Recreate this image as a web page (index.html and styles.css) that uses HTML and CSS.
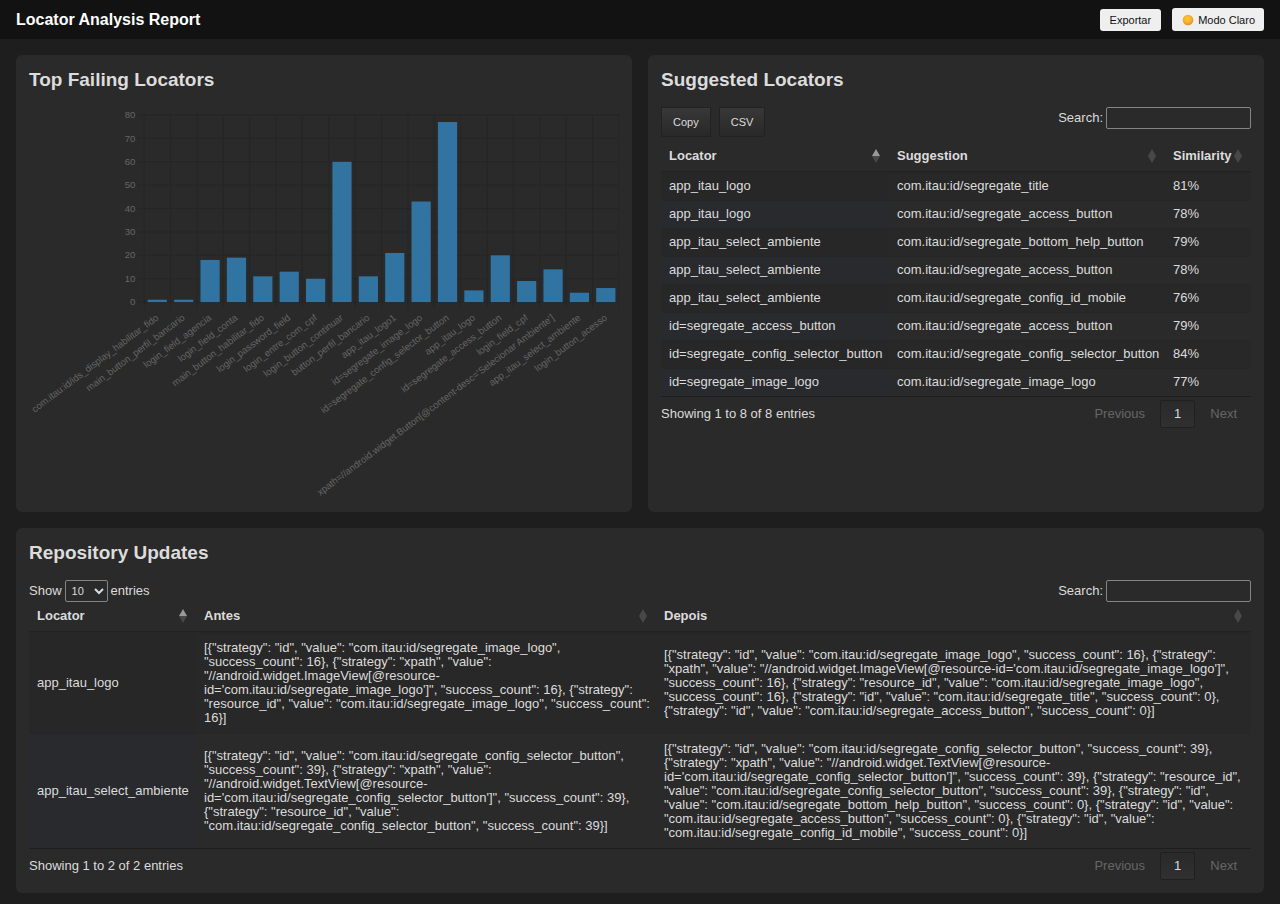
FILE: index.html
```
<!DOCTYPE html>
<html lang="pt-BR">
<head>
<meta charset="utf-8">
<title>Locator Analysis Report</title>
<link rel="stylesheet" href="styles.css">
</head>
<body>
<header class="topbar">
  <h1 class="topbar-title">Locator Analysis Report</h1>
  <div class="topbar-actions">
    <button class="action" type="button">Exportar</button>
    <button class="action action-theme" type="button">
      <svg class="sun" viewBox="0 0 12 12" aria-hidden="true">
        <defs><radialGradient id="sun" cx="45%" cy="40%" r="60%"><stop offset="0" stop-color="#fbc934"/><stop offset=".6" stop-color="#f5b02c"/><stop offset="1" stop-color="#e58a2c"/></radialGradient></defs>
        <circle cx="6" cy="6" r="5.3" fill="url(#sun)"/>
      </svg>
      Modo Claro
    </button>
  </div>
</header>
<main class="dashboard">
  <section class="card">
    <h2 class="card-title">Top Failing Locators</h2>
    <svg class="chart" id="chart" viewBox="0 0 738 490" role="img" aria-label="Top Failing Locators"></svg>
  </section>

  <section class="card">
    <h2 class="card-title">Suggested Locators</h2>
    <div class="toolbar">
      <div class="export-buttons">
        <button class="export" type="button">Copy</button>
        <button class="export" type="button">CSV</button>
      </div>
      <label class="field">Search: <input class="search" type="search"></label>
    </div>
    <table class="grid grid-suggestions">
      <colgroup><col class="col-name"><col class="col-suggestion"><col></colgroup>
      <thead>
        <tr>
          <th><span class="head">Locator<svg class="sort sort-asc" viewBox="0 0 8 14"><path d="M4 0 8 7H0z"/><path d="M4 14 8 7H0z"/></svg></span></th>
          <th><span class="head">Suggestion<svg class="sort" viewBox="0 0 8 14"><path d="M4 0 8 7H0z"/><path d="M4 14 8 7H0z"/></svg></span></th>
          <th><span class="head">Similarity<svg class="sort" viewBox="0 0 8 14"><path d="M4 0 8 7H0z"/><path d="M4 14 8 7H0z"/></svg></span></th>
        </tr>
      </thead>
      <tbody>
        <tr><td>app_itau_logo</td><td>com.itau:id/segregate_title</td><td>81%</td></tr>
        <tr><td>app_itau_logo</td><td>com.itau:id/segregate_access_button</td><td>78%</td></tr>
        <tr><td>app_itau_select_ambiente</td><td>com.itau:id/segregate_bottom_help_button</td><td>79%</td></tr>
        <tr><td>app_itau_select_ambiente</td><td>com.itau:id/segregate_access_button</td><td>78%</td></tr>
        <tr><td>app_itau_select_ambiente</td><td>com.itau:id/segregate_config_id_mobile</td><td>76%</td></tr>
        <tr><td>id=segregate_access_button</td><td>com.itau:id/segregate_access_button</td><td>79%</td></tr>
        <tr><td>id=segregate_config_selector_button</td><td>com.itau:id/segregate_config_selector_button</td><td>84%</td></tr>
        <tr><td>id=segregate_image_logo</td><td>com.itau:id/segregate_image_logo</td><td>77%</td></tr>
      </tbody>
    </table>
    <div class="table-footer">
      <span>Showing 1 to 8 of 8 entries</span>
      <nav class="pager" aria-label="Suggested Locators">
        <button class="page" type="button" disabled>Previous</button>
        <button class="page page-current" type="button">1</button>
        <button class="page" type="button" disabled>Next</button>
      </nav>
    </div>
  </section>

  <section class="card card-wide">
    <h2 class="card-title">Repository Updates</h2>
    <div class="toolbar toolbar-compact">
      <label class="field">Show <select class="length"><option>10</option><option>25</option><option>50</option><option>100</option></select> entries</label>
      <label class="field">Search: <input class="search" type="search"></label>
    </div>
    <table class="grid grid-updates">
      <colgroup><col class="col-locator"><col class="col-before"><col></colgroup>
      <thead>
        <tr>
          <th><span class="head">Locator<svg class="sort sort-asc" viewBox="0 0 8 14"><path d="M4 0 8 7H0z"/><path d="M4 14 8 7H0z"/></svg></span></th>
          <th><span class="head">Antes<svg class="sort" viewBox="0 0 8 14"><path d="M4 0 8 7H0z"/><path d="M4 14 8 7H0z"/></svg></span></th>
          <th><span class="head">Depois<svg class="sort" viewBox="0 0 8 14"><path d="M4 0 8 7H0z"/><path d="M4 14 8 7H0z"/></svg></span></th>
        </tr>
      </thead>
      <tbody>
        <tr>
          <td>app_itau_logo</td>
          <td>[{"strategy": "id", "value": "com.itau:id/segregate_image_logo", "success_count": 16}, {"strategy": "xpath", "value": "//android.widget.ImageView[@resource-id='com.itau:id/segregate_image_logo']", "success_count": 16}, {"strategy": "resource_id", "value": "com.itau:id/segregate_image_logo", "success_count": 16}]</td>
          <td>[{"strategy": "id", "value": "com.itau:id/segregate_image_logo", "success_count": 16}, {"strategy": "xpath", "value": "//android.widget.ImageView[@resource-id='com.itau:id/segregate_image_logo']", "success_count": 16}, {"strategy": "resource_id", "value": "com.itau:id/segregate_image_logo", "success_count": 16}, {"strategy": "id", "value": "com.itau:id/segregate_title", "success_count": 0}, {"strategy": "id", "value": "com.itau:id/segregate_access_button", "success_count": 0}]</td>
        </tr>
        <tr>
          <td>app_itau_select_ambiente</td>
          <td>[{"strategy": "id", "value": "com.itau:id/segregate_config_selector_button", "success_count": 39}, {"strategy": "xpath", "value": "//android.widget.TextView[@resource-id='com.itau:id/segregate_config_selector_button']", "success_count": 39}, {"strategy": "resource_id", "value": "com.itau:id/segregate_config_selector_button", "success_count": 39}]</td>
          <td>[{"strategy": "id", "value": "com.itau:id/segregate_config_selector_button", "success_count": 39}, {"strategy": "xpath", "value": "//android.widget.TextView[@resource-id='com.itau:id/segregate_config_selector_button']", "success_count": 39}, {"strategy": "resource_id", "value": "com.itau:id/segregate_config_selector_button", "success_count": 39}, {"strategy": "id", "value": "com.itau:id/segregate_bottom_help_button", "success_count": 0}, {"strategy": "id", "value": "com.itau:id/segregate_access_button", "success_count": 0}, {"strategy": "id", "value": "com.itau:id/segregate_config_id_mobile", "success_count": 0}]</td>
        </tr>
      </tbody>
    </table>
    <div class="table-footer">
      <span>Showing 1 to 2 of 2 entries</span>
      <nav class="pager" aria-label="Repository Updates">
        <button class="page" type="button" disabled>Previous</button>
        <button class="page page-current" type="button">1</button>
        <button class="page" type="button" disabled>Next</button>
      </nav>
    </div>
  </section>
</main>
<script src="chart.js"></script>
</body>
</html>
```
FILE: styles.css
```
* {
  box-sizing: border-box;
}

body {
  margin: 0;
  background: #1e1e1e;
  color: #dcdcdc;
  color-scheme: dark;
  font: 13px/14px "Liberation Sans", Arial, sans-serif;
}

button,
input,
select {
  font-family: inherit;
}

.topbar {
  display: flex;
  align-items: center;
  justify-content: space-between;
  min-height: 39px;
  padding: 0 16px;
  background: #121212;
  color: #fff;
}

.topbar-title {
  margin: 0;
  font-size: 16px;
  line-height: 20px;
}

.topbar-actions {
  display: flex;
  align-items: flex-end;
  gap: 11px;
}

.action {
  display: flex;
  align-items: center;
  gap: 4px;
  padding: 4px 10px;
  border: 0;
  border-radius: 3px;
  background: #efefef;
  color: #111;
  font-size: 11px;
  line-height: 14px;
}

.action-theme {
  padding: 5px 9px 4px 10px;
}

.sun {
  width: 12px;
  height: 12px;
}

.dashboard {
  display: grid;
  grid-template-columns: repeat(2, minmax(0, 1fr));
  gap: 16px;
  padding: 16px 16px 12px;
}

.card {
  padding: 13px;
  border-radius: 6px;
  background: #2a2a2a;
}

.card-wide {
  grid-column: 1 / -1;
}

.card-title {
  margin: 0 0 16px;
  font-size: 19px;
  line-height: 23px;
}

.chart {
  display: block;
  width: 100%;
}

.chart-grid {
  stroke: #252525;
}

.chart-bar {
  fill: #3274a1;
}

.chart-text {
  fill: #666;
  font-size: 12px;
  text-anchor: end;
}

.toolbar {
  display: flex;
  align-items: flex-start;
  justify-content: space-between;
  margin-bottom: 5px;
}

.toolbar-compact {
  margin-bottom: 0;
}

.export-buttons {
  display: flex;
  gap: 8px;
}

.export {
  padding: 7px 11px;
  border: 1px solid #222;
  border-radius: 1px;
  background: linear-gradient(#383838, #282828);
  color: #dcdcdc;
  font-size: 11px;
  line-height: 14px;
}

.field {
  display: flex;
  align-items: center;
  gap: 3px;
}

.search {
  width: 145px;
  height: 22px;
  border: 1px solid #858585;
  border-radius: 2px;
  background: transparent;
}

.length {
  width: 43px;
  height: 22px;
  padding: 0 2px;
  border: 1px solid #858585;
  border-radius: 2px;
  background: #2a2a2a;
  color: #dcdcdc;
  font-size: 11px;
}

.grid {
  width: 100%;
  border-collapse: separate;
  border-spacing: 0;
  border-bottom: 1px solid #1d1d1d;
  table-layout: fixed;
}

.col-name {
  width: 228px;
}

.col-suggestion {
  width: 276px;
}

.col-locator {
  width: 167px;
}

.col-before {
  width: 460px;
}

.grid th {
  padding: 7px 9px 8px 8px;
  border-bottom: 1px solid #222;
  text-align: left;
}

.grid td {
  padding: 6px 0 7px 8px;
  border-top: 1px solid #262626;
}

.grid-updates td {
  padding: 8px 2px 8px 8px;
}

.grid tbody tr:nth-child(odd) td {
  background: #282828;
}

.grid tbody tr:nth-child(odd) td:first-child {
  background: #272727;
}

.grid tbody tr:nth-child(even) td:first-child {
  background: #292a2d;
}

.head {
  display: flex;
  align-items: center;
  justify-content: space-between;
}

.sort {
  flex: none;
  width: 8px;
  height: 14px;
  fill: #484848;
}

.sort-asc path:first-child {
  fill: #999;
}

.table-footer {
  display: flex;
  align-items: center;
  justify-content: space-between;
  margin-top: 3px;
}

.pager {
  display: flex;
  gap: 1px;
}

.page {
  padding: 6px 13px;
  border: 1px solid transparent;
  border-radius: 2px;
  background: none;
  color: #666;
  font-size: 13px;
  line-height: 14px;
}

.page-current {
  border-color: #202020;
  background: linear-gradient(#2a2a2a, #303030);
  color: #dcdcdc;
}
```
FILE: chart.js
```
const data = [
  ["com.itau:id/ids_display_habilitar_fido", 1],
  ["main_button_perfil_bancario", 1],
  ["login_field_agencia", 18],
  ["login_field_conta", 19],
  ["main_button_habilitar_fido", 11],
  ["login_password_field", 13],
  ["login_entre_com_cpf", 10],
  ["login_button_continuar", 60],
  ["button_perfil_bancario", 11],
  ["app_itau_logo1", 21],
  ["id=segregate_image_logo", 43],
  ["id=segregate_config_selector_button", 77],
  ["app_itau_logo", 5],
  ["id=segregate_access_button", 20],
  ["login_field_cpf", 9],
  ["xpath=//android.widget.Button[@content-desc='Selecionar Ambiente']", 14],
  ["app_itau_select_ambiente", 4],
  ["login_button_acesso", 6]
];
const chart = document.getElementById("chart");
const left = 144, right = 738, top0 = 10, base = 244, max = 80;
const step = (right - left) / data.length;

function add(name, attrs, text) {
  const el = document.createElementNS("http://www.w3.org/2000/svg", name);
  for (const key in attrs) el.setAttribute(key, attrs[key]);
  if (text !== undefined) el.textContent = text;
  chart.appendChild(el);
}

for (let v = 0; v <= max; v += 10) {
  const y = base - v * (base - top0) / max;
  add("line", { class: "chart-grid", x1: left - 8, x2: right, y1: y, y2: y });
  add("text", { class: "chart-text", x: left - 11, y: y + 4 }, v);
}
for (let i = 0; i <= data.length; i++) {
  const x = left + i * step;
  add("line", { class: "chart-grid", x1: x, x2: x, y1: top0, y2: base + 8 });
}
data.forEach(([label, value], i) => {
  const x = left + i * step;
  const h = value * (base - top0) / max;
  add("rect", { class: "chart-bar", x: x + 4.5, y: base - h, width: 24, height: h });
  const cx = x + step / 2;
  add("text", { class: "chart-text", x: cx, y: 266, transform: `rotate(-37 ${cx} 262)` }, label);
});
```
